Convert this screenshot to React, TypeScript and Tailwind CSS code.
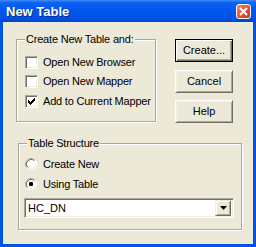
import React from "react";

const font = { fontFamily: '"Liberation Sans", Arial, sans-serif' };

// classic 7x7 check glyph, row by row
const checkRows = ["......X", ".....XX", "X...XXX", "XX.XXX.", "XXXXX..", ".XXX...", "..X...."];

function Checkbox({ checked, label }: { checked?: boolean; label: string }) {
  return (
    <div className="flex items-center gap-[5px] h-[13px]">
      <div className="w-[13px] h-[13px] bg-white border border-t-[#ACA899] border-l-[#ACA899] border-b-white border-r-white shadow-[inset_1px_1px_0_#716F64,inset_-1px_-1px_0_#F1EFE2] flex items-center justify-center">
        {checked && (
          <svg width="7" height="7" viewBox="0 0 7 7">
            {checkRows.map((row, y) =>
              row.split("").map((c, x) => (c === "X" ? <rect key={x + "-" + y} x={x} y={y} width="1" height="1" fill="#000" /> : null))
            )}
          </svg>
        )}
      </div>
      <span className="text-[11px] leading-[13px] text-black tracking-[-0.2px]">{label}</span>
    </div>
  );
}

function Radio({ checked, label }: { checked?: boolean; label: string }) {
  return (
    <div className="flex items-center gap-[6px] h-[12px]">
      <svg width="12" height="12" viewBox="0 0 12 12">
        <circle cx="6" cy="6" r="5" fill="#fff" />
        <path d="M2.11 9.89A5.5 5.5 0 0 1 9.89 2.11" stroke="#ACA899" fill="none" />
        <path d="M9.89 2.11A5.5 5.5 0 0 1 2.11 9.89" stroke="#fff" fill="none" />
        <path d="M2.82 9.18A4.5 4.5 0 0 1 9.18 2.82" stroke="#716F64" fill="none" />
        <path d="M9.18 2.82A4.5 4.5 0 0 1 2.82 9.18" stroke="#F1EFE2" fill="none" />
        {checked && <rect x="4" y="4" width="4" height="4" rx="1" fill="#000" />}
      </svg>
      <span className="text-[11px] leading-[13px] text-black tracking-[-0.2px]">{label}</span>
    </div>
  );
}

function Button({ label, isDefault }: { label: string; isDefault?: boolean }) {
  if (isDefault) {
    return (
      <div className="w-[58px] h-[23px] border border-black bg-[#ECE9D8] shadow-[inset_1px_1px_0_#fff,inset_-1px_-1px_0_#716F64,inset_-2px_-2px_0_#ACA899] flex items-center justify-center text-[11px] text-black">
        {label}
      </div>
    );
  }
  return (
    <div className="w-[58px] h-[23px] border border-t-white border-l-white border-b-[#716F64] border-r-[#716F64] bg-[#ECE9D8] shadow-[inset_1px_1px_0_#F1EFE2,inset_-1px_-1px_0_#ACA899] flex items-center justify-center text-[11px] text-black">
      {label}
    </div>
  );
}

function Group({ title, className, children }: { title: string; className: string; children: React.ReactNode }) {
  return (
    <div className={"relative border border-[#ACA899] shadow-[inset_1px_1px_0_#fff,1px_1px_0_#fff] " + className}>
      <span className="absolute -top-[7px] left-[8px] px-[1px] bg-[#ECE9D8] text-[11px] leading-[13px] text-black tracking-[-0.2px]">
        {title}
      </span>
      {children}
    </div>
  );
}

export default function App() {
  return (
    <div className="w-[256px] h-[247px] flex flex-col bg-[#0054E3] overflow-hidden" style={font}>
      <div className="h-[22px] shrink-0 flex items-center justify-between pl-[6px] pr-[5px] bg-[linear-gradient(to_bottom,#3D8FF8_0%,#0D62F0_12%,#0058EE_45%,#0053E6_80%,#0044CF_100%)]">
        <span className="text-[13px] font-bold text-white leading-none [text-shadow:1px_1px_0_#0A2A8A]">New Table</span>
        <div className="w-[15px] h-[15px] rounded-[3px] border border-white bg-[linear-gradient(135deg,#F0906E_0%,#E2532F_50%,#C8381A_100%)] flex items-center justify-center">
          <svg width="9" height="9" viewBox="0 0 9 9">
            <path d="M1 1L8 8M8 1L1 8" stroke="#fff" strokeWidth="2" />
          </svg>
        </div>
      </div>
      <div className="flex-1 mx-[3px] mb-[3px] bg-[#ECE9D8] flex flex-col pt-[17px]">
        <div className="flex">
          <Group title="Create New Table and:" className="ml-[13px] w-[140px] h-[83px] pl-[8px] pt-[16px]">
            <div className="flex flex-col gap-[6px]">
              <Checkbox label="Open New Browser" />
              <Checkbox label="Open New Mapper" />
              <div className="mt-[1px]">
                <Checkbox checked label="Add to Current Mapper" />
              </div>
            </div>
          </Group>
          <div className="ml-[19px] flex flex-col">
            <Button isDefault label="Create..." />
            <div className="mt-[8px]">
              <Button label="Cancel" />
            </div>
            <div className="mt-[7px]">
              <Button label="Help" />
            </div>
          </div>
        </div>
        <Group title="Table Structure" className="mt-[20px] ml-[15px] w-[224px] h-[87px] pl-[5px] pt-[14px]">
          <div className="flex flex-col">
            <div className="ml-[1px] flex flex-col gap-[8px]">
              <Radio label="Create New" />
              <Radio checked label="Using Table" />
            </div>
            <div className="mt-[8px] w-[210px] h-[20px] bg-white border border-t-[#ACA899] border-l-[#ACA899] border-b-white border-r-white shadow-[inset_1px_1px_0_#716F64,inset_-1px_-1px_0_#F1EFE2] flex items-center justify-between pl-[3px] pr-[2px]">
              <span className="text-[11px] leading-[13px] text-black">HC_DN</span>
              <div className="w-[16px] h-[16px] bg-[#ECE9D8] border border-t-[#F1EFE2] border-l-[#F1EFE2] border-b-[#716F64] border-r-[#716F64] shadow-[inset_1px_1px_0_#fff,inset_-1px_-1px_0_#ACA899] flex items-center justify-center">
                <svg width="7" height="4" viewBox="0 0 7 4">
                  <path d="M0 0h7L3.5 4z" fill="#000" />
                </svg>
              </div>
            </div>
          </div>
        </Group>
      </div>
    </div>
  );
}
